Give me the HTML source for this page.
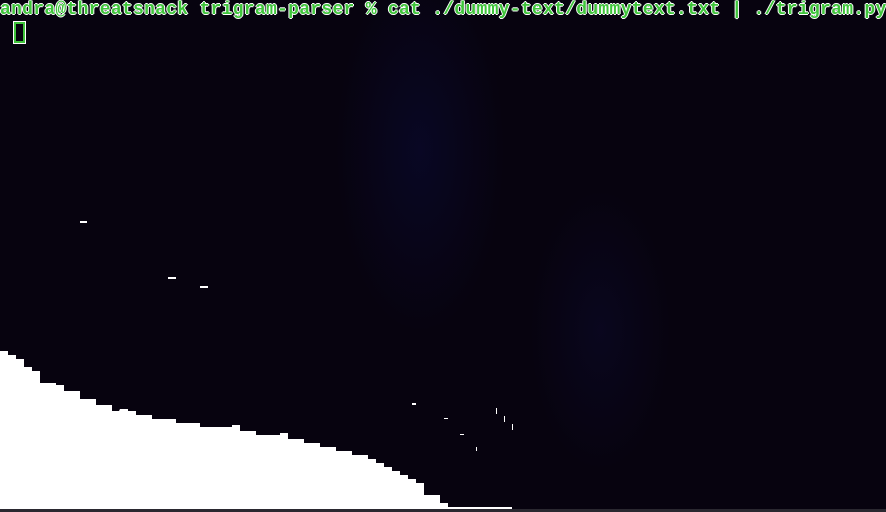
<!DOCTYPE html>
<html><head><meta charset="utf-8"><style>
html,body{margin:0;padding:0;width:886px;height:512px;overflow:hidden;background:#07030f;}
.bg{position:absolute;left:0;top:0;width:886px;height:512px;
background:
radial-gradient(ellipse 120px 260px at 420px 150px, rgba(10,10,50,0.6), transparent 70%),
radial-gradient(ellipse 100px 200px at 600px 330px, rgba(12,10,45,0.5), transparent 70%),
#07030f;}
.t{position:absolute;left:0;top:0;font-family:"Liberation Mono",monospace;font-size:18px;line-height:20px;color:#3ec43a;font-weight:bold;white-space:pre;
text-shadow:1px 0 0 #fff,-1px 0 0 #fff,0 1px 0 #fff,0 -1px 0 #fff;letter-spacing:0.28px;}
.cur{position:absolute;left:14px;top:22px;width:7px;height:17px;border:2px solid #3ec43a;outline:1px solid #fff;}
svg{position:absolute;left:0;top:0;}
</style></head><body>
<div class="bg"></div>
<div class="t">andra@threatsnack trigram-parser % cat ./dummy-text/dummytext.txt | ./trigram.py</div>
<div class="cur"></div>
<svg width="886" height="512">
<polygon fill="#fff" points="0,351 8,351 8,355 16,355 16,359 24,359 24,367 32,367 32,371 40,371 40,383 56,383 56,385 64,385 64,391 80,391 80,399 96,399 96,405 112,405 112,411 119,411 120,409 128,409 128,411 136,411 136,415 152,415 152,419 176,419 176,423 200,423 200,427 232,427 232,425 240,425 240,431 256,431 256,435 280,435 280,433 288,433 288,439 304,439 304,443 320,443 320,447 336,447 336,451 352,451 352,455 368,455 368,459 376,459 376,463 384,463 384,467 392,467 392,471 400,471 400,475 408,475 408,479 416,479 416,483 424,483 424,495 440,495 440,503 448,503 448,507 512,507 512,509 0,509"/>
<rect x="0" y="509" width="886" height="3" fill="#2a2830"/>
<rect x="80" y="221" width="7" height="2" fill="#fff"/>
<rect x="168" y="277" width="8" height="2" fill="#fff"/>
<rect x="200" y="286" width="8" height="2" fill="#fff"/>
<rect x="412" y="403" width="4" height="2" fill="#fff"/>
<rect x="444" y="418" width="4" height="1" fill="#fff"/>
<rect x="460" y="434" width="4" height="1" fill="#fff"/>
<rect x="496" y="408" width="1" height="6" fill="#fff"/>
<rect x="504" y="416" width="1" height="6" fill="#fff"/>
<rect x="512" y="424" width="1" height="6" fill="#fff"/>
<rect x="476" y="447" width="1" height="4" fill="#fff"/>
</svg>
</body></html>
